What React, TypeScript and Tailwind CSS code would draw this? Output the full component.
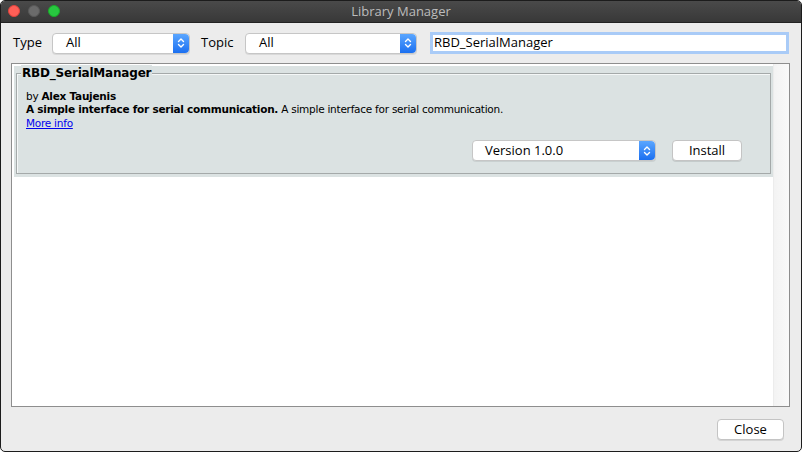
import React from 'react';

const Stepper: React.FC = () => (
  <div className="w-[16px] h-full rounded-r-[4px] bg-gradient-to-b from-[#5aa6ff] to-[#1a6ff0] flex items-center justify-center">
    <svg width="8" height="12" viewBox="0 0 8 12" fill="none" stroke="white" strokeWidth="1.4" strokeLinecap="round" strokeLinejoin="round">
      <path d="M1.5 4.5 L4 2 L6.5 4.5" />
      <path d="M1.5 7.5 L4 10 L6.5 7.5" />
    </svg>
  </div>
);

const Combo: React.FC<{ value: string; width: string; pad?: string }> = ({ value, width, pad = 'pl-[13px]' }) => (
  <div className={`${width} h-[21px] flex items-stretch bg-white rounded-[4px] border border-[#c6c6c6] shadow-[0_1px_0_rgba(0,0,0,0.08)]`}>
    <div className={`flex-1 flex items-center ${pad} text-[13px] text-black`}>{value}</div>
    <Stepper />
  </div>
);

const PushButton: React.FC<{ label: string; width: string }> = ({ label, width }) => (
  <div className={`${width} h-[21px] flex items-center justify-center bg-white rounded-[4px] border border-[#c4c4c4] shadow-[0_1px_0_rgba(0,0,0,0.1)] text-[13px] text-black`}>
    {label}
  </div>
);

const App: React.FC = () => {
  return (
    <div className="w-[802px] h-[452px] bg-white font-['Open_Sans','Liberation_Sans',sans-serif]">
      <div className="w-full h-full rounded-[5px] overflow-hidden border border-[#1c1c1c] bg-[#ececec] flex flex-col">
        {/* Title bar */}
        <div className="h-[22px] relative flex items-center justify-center bg-gradient-to-b from-[#4a4a4a] to-[#383838] border-b border-[#232323]">
          <div className="absolute left-[7px] top-[4px] flex gap-[8px]">
            <span className="w-[12px] h-[12px] rounded-full bg-[#fe5f57] border border-[#e0443e]" />
            <span className="w-[12px] h-[12px] rounded-full bg-[#6b6b6b] border border-[#5a5a5a]" />
            <span className="w-[12px] h-[12px] rounded-full bg-[#28c840] border border-[#1aab29]" />
          </div>
          <span className="text-[13px] text-[#bcbcbc]">Library Manager</span>
        </div>

        {/* Filters */}
        <div className="mt-[9px] pl-[12px] flex items-center h-[22px]">
          <span className="w-[39px] text-[13px] text-black">Type</span>
          <Combo value="All" width="w-[138px]" />
          <span className="ml-[11px] w-[44px] text-[13px] text-black">Topic</span>
          <Combo value="All" width="w-[172px]" />
          <div className="ml-[13px] w-[359px] h-[22px] flex items-center bg-white border-[3px] border-[#a9cbf7] px-[1px] text-[13px] text-black">
            RBD_SerialManager
          </div>
        </div>

        {/* Library list */}
        <div className="mt-[9px] ml-[10px] w-[779px] h-[344px] border border-[#8e8e8e] bg-white flex">
          <div className="flex-1 pt-[2px] pl-[2px]">
            <div className="h-[111px] bg-[#dbe2e2] pt-[7px] pl-[2px] pr-[2px]">
              <div className="relative h-[101px] border border-[#a4a9a9] shadow-[inset_1px_1px_0_#f4f7f7]">
                <span className="absolute -top-[9px] left-[4px] px-[1px] bg-[#dbe2e2] text-[12px] font-bold leading-[16px] tracking-[-0.2px] font-['DejaVu_Sans',sans-serif] text-black">
                  RBD_SerialManager
                </span>
                <div className="pt-[16px] pl-[9px] text-[10.5px] leading-[13px] font-['DejaVu_Sans',sans-serif] text-black tracking-[-0.25px]">
                  <div>
                    by <b>Alex Taujenis</b>
                  </div>
                  <div>
                    <b>A simple interface for serial communication.</b> A simple interface for serial communication.
                  </div>
                  <div className="mt-[1px] text-[#0000ee] underline">More info</div>
                </div>
                <div className="absolute top-[66px] left-[455px] flex items-center">
                  <Combo value="Version 1.0.0" width="w-[184px]" pad="pl-[12px]" />
                  <div className="ml-[16px]">
                    <PushButton label="Install" width="w-[70px]" />
                  </div>
                </div>
              </div>
            </div>
          </div>
          <div className="w-[16px] h-full bg-gradient-to-r from-[#f3f3f3] to-[#fafafa] border-l border-[#ececec]" />
        </div>

        {/* Footer */}
        <div className="mt-[12px] flex justify-end pr-[17px]">
          <PushButton label="Close" width="w-[67px]" />
        </div>
      </div>
    </div>
  );
};

export default App;
